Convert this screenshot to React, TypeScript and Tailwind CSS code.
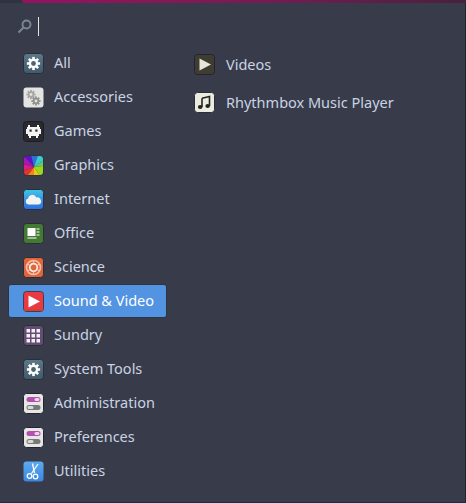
const Tile = ({ className = "", children }: { className?: string; children: React.ReactNode }) => (
  <svg viewBox="0 0 21 21" className={`w-[21px] h-[21px] shrink-0 ${className}`}>
    {children}
  </svg>
);

const Gear = ({ fill = "#fff", cx = 10.5, cy = 10.5, s = 1 }: { fill?: string; cx?: number; cy?: number; s?: number }) => (
  <g transform={`translate(${cx} ${cy}) scale(${s})`}>
    {[0, 45, 90, 135].map((a) => (
      <rect key={a} x="-1.3" y="-6.6" width="2.6" height="13.2" fill={fill} transform={`rotate(${a})`} />
    ))}
    <circle r="4.7" fill={fill} />
    <circle r="2.4" fill="#4a6676" />
  </g>
);

const SettingsIcon = () => (
  <Tile>
    <defs>
      <linearGradient id="sys" x1="0" y1="0" x2="0" y2="1">
        <stop offset="0" stopColor="#5d7888" />
        <stop offset="1" stopColor="#3e5a6b" />
      </linearGradient>
    </defs>
    <rect x="0.5" y="0.5" width="20" height="20" rx="3" fill="url(#sys)" stroke="#2b2e38" />
    <Gear />
  </Tile>
);

const SwitchIcon = () => (
  <Tile>
    <rect x="0.5" y="0.5" width="20" height="20" rx="3" fill="#e6e6e4" stroke="#23252d" />
    <rect x="3.5" y="4" width="14" height="5" rx="2.5" fill="#b44fb0" />
    <rect x="11.5" y="5" width="5" height="3" rx="1.5" fill="#eed5ee" />
    <rect x="3.5" y="12" width="14" height="5" rx="2.5" fill="#77787a" />
    <rect x="4.5" y="13" width="6" height="3" rx="1.5" fill="#d8d8d8" />
  </Tile>
);

const wheel: [string, string][] = [
  ["0,0 8,0", "#5a16c4"],
  ["8,0 15,0", "#2f6fd8"],
  ["15,0 21,0 21,5", "#3ec8d4"],
  ["21,5 21,11", "#58d070"],
  ["21,11 21,21 17,21", "#9ad81e"],
  ["17,21 11,21", "#e8c818"],
  ["11,21 4,21", "#f0851e"],
  ["4,21 0,21 0,16", "#e2362c"],
  ["0,16 0,9", "#d81e88"],
  ["0,9 0,0", "#a818b0"],
];

const categories: { name: string; icon: React.ReactNode }[] = [
  { name: "All", icon: <SettingsIcon /> },
  {
    name: "Accessories",
    icon: (
      <Tile>
        <rect x="0.5" y="0.5" width="20" height="20" rx="3" fill="#e4e4e2" />
        {[0, 45, 90, 135].map((a) => (
          <rect key={a} x="-0.9" y="-4.6" width="1.8" height="9.2" fill="#a5a5a3" transform={`translate(8 7.5) rotate(${a})`} />
        ))}
        <circle cx="8" cy="7.5" r="2.9" fill="#a5a5a3" />
        <circle cx="8" cy="7.5" r="1.4" fill="#e4e4e2" />
        {[0, 45, 90, 135].map((a) => (
          <rect key={a} x="-0.9" y="-4.6" width="1.8" height="9.2" fill="#8f8f8d" transform={`translate(13 14) rotate(${a})`} />
        ))}
        <circle cx="13" cy="14" r="2.9" fill="#8f8f8d" />
        <circle cx="13" cy="14" r="1.4" fill="#e4e4e2" />
      </Tile>
    ),
  },
  {
    name: "Games",
    icon: (
      <Tile>
        <rect x="0.5" y="0.5" width="20" height="20" rx="3" fill="#2a2a2e" stroke="#1c1d22" />
        <path
          d="M5 4h2v2h7V4h2v2h1v2h1v5h-2v2h-1v2h-2v-2H8v2H6v-2H5v-2H3V8h1V6h1z"
          fill="#f4f4f4"
        />
        <rect x="6.500" y="8.500" width="2.200" height="2.200" fill="#2a2a2e" />
        <rect x="12.300" y="8.500" width="2.200" height="2.200" fill="#2a2a2e" />
      </Tile>
    ),
  },
  {
    name: "Graphics",
    icon: (
      <Tile>
        <defs>
          <clipPath id="wheel">
            <rect x="1" y="1" width="19" height="19" rx="3" />
          </clipPath>
        </defs>
        <rect x="0.5" y="0.5" width="20" height="20" rx="3" fill="#2b2e38" />
        <g clipPath="url(#wheel)">
          {wheel.map(([pts, color]) => (
            <polygon key={pts} points={`11,12 ${pts}`} fill={color} />
          ))}
        </g>
      </Tile>
    ),
  },
  {
    name: "Internet",
    icon: (
      <Tile>
        <defs>
          <linearGradient id="net" x1="0" y1="0" x2="0" y2="1">
            <stop offset="0" stopColor="#3fc6e4" />
            <stop offset="0.5" stopColor="#3a94e6" />
            <stop offset="1" stopColor="#2c6fdc" />
          </linearGradient>
        </defs>
        <rect x="0.5" y="0.5" width="20" height="20" rx="3" fill="url(#net)" stroke="#2b2e38" />
        <path d="M5.500 15.500a3 3 0 0 1-.4-5.900 4 4 0 0 1 3-3.600 4.200 4.200 0 0 1 5.200 2.600 3.500 3.500 0 0 1 2.300 6.900z" fill="#f2f3f5" />
      </Tile>
    ),
  },
  {
    name: "Office",
    icon: (
      <Tile>
        <rect x="0.5" y="0.5" width="20" height="20" rx="3" fill="#437a33" stroke="#2b2e38" />
        <rect x="4.500" y="5" width="8" height="8" fill="#fff" />
        <rect x="13.500" y="5.500" width="3" height="1" fill="#fff" />
        <rect x="13.500" y="8.500" width="3" height="1" fill="#fff" />
        <rect x="13.500" y="11.500" width="3" height="1" fill="#fff" />
        <rect x="4.500" y="14.500" width="9" height="1" fill="#fff" />
      </Tile>
    ),
  },
  {
    name: "Science",
    icon: (
      <Tile>
        <rect x="0.5" y="0.5" width="20" height="20" rx="3" fill="#e2653a" stroke="#2b2e38" />
        <circle cx="10.500" cy="10.500" r="7" fill="none" stroke="#f3c3ae" strokeWidth="1.600" />
        <circle cx="10.500" cy="10.500" r="3.800" fill="none" stroke="#fbeee8" strokeWidth="1.800" />
        <circle cx="10.500" cy="10.500" r="1.300" fill="#e2653a" />
        {[0, 60, 120].map((a) => (
          <path key={a} d="M10.500 3V6.500M10.500 14.500V18" stroke="#f3c3ae" strokeWidth="1" transform={`rotate(${a} 10.500 10.500)`} />
        ))}
      </Tile>
    ),
  },
  {
    name: "Sound & Video",
    icon: (
      <Tile>
        <rect x="0.5" y="0.5" width="20" height="20" rx="3" fill="#e93a44" stroke="#3a3f55" />
        <rect x="1" y="18.500" width="19" height="1.500" fill="#d0402a" />
        <path d="M5.500 4.500L17 10.500L5.500 16.500z" fill="#fff" />
      </Tile>
    ),
  },
  {
    name: "Sundry",
    icon: (
      <Tile>
        <rect x="0.5" y="0.5" width="20" height="20" rx="3" fill="#644d74" stroke="#2b2e38" />
        {[4, 9, 14].map((y) =>
          [3.500, 8.500, 13.500].map((x) => <rect key={`${x}-${y}`} x={x} y={y} width="3.500" height="3.500" fill="#f2eef4" />),
        )}
      </Tile>
    ),
  },
  { name: "System Tools", icon: <SettingsIcon /> },
  { name: "Administration", icon: <SwitchIcon /> },
  { name: "Preferences", icon: <SwitchIcon /> },
  {
    name: "Utilities",
    icon: (
      <Tile>
        <defs>
          <linearGradient id="utl" x1="0" y1="0" x2="0" y2="1">
            <stop offset="0" stopColor="#5cabf0" />
            <stop offset="1" stopColor="#3a86e2" />
          </linearGradient>
        </defs>
        <rect x="0.5" y="0.5" width="20" height="20" rx="3" fill="url(#utl)" />
        <g fill="none" stroke="#fff" strokeWidth="1.300">
          <path d="M9.500 2.500L11.500 12" />
          <path d="M15 3L8.500 12.500" />
          <circle cx="6.500" cy="15" r="2.300" />
          <circle cx="12.500" cy="15.500" r="2.300" />
        </g>
      </Tile>
    ),
  },
];

export default function App() {
  return (
    <div
      className="w-[466px] h-[503px] bg-[#383c4a] flex flex-col overflow-hidden text-[14.5px] text-[#c9d3e3]"
      style={{ fontFamily: '"Noto Sans", "Open Sans", sans-serif' }}
    >
      {/* top edge, the window behind the menu */}
      <div className="h-[3px] shrink-0 flex bg-[#2f3340]">
        <div className="ml-[22px] flex-1 rounded-bl-sm bg-gradient-to-r from-[#96125f] via-[#7a1a58] to-[#4a1f3e]" />
      </div>

      <div className="flex-1 min-h-0 flex border-r border-[#1f2530]">
        <div className="w-[176px] shrink-0 pl-[8px] pt-[9px] flex flex-col">
          {/* search */}
          <div className="h-[28px] flex items-center pl-[9px] gap-[6px]">
            <svg viewBox="0 0 15 15" className="w-[15px] h-[15px] shrink-0">
              <circle cx="9.500" cy="5.500" r="4" fill="none" stroke="#7b8790" strokeWidth="1.900" />
              <path d="M6.500 8.500L1.500 13.500" stroke="#7b8790" strokeWidth="2" />
            </svg>
            <div className="w-px h-[19px] bg-[#e4e4e4]" />
          </div>

          <ul className="mt-[6px] flex flex-col">
            {categories.map((c) => {
              const active = c.name === "Sound & Video";
              return (
                <li
                  key={c.name}
                  className={`h-[34px] w-[159px] flex items-center pl-[14px] gap-[10px] whitespace-nowrap rounded-[3px] border ${
                    active ? "bg-[#5294e2] border-[#30343f] text-white" : "border-transparent"
                  }`}
                >
                  {c.icon}
                  <span>{c.name}</span>
                </li>
              );
            })}
          </ul>
        </div>

        <div className="flex-1 pl-[18px] pt-[51px] flex flex-col gap-[17px]">
          <div className="h-[21px] flex items-center gap-[11px]">
            <Tile>
              <rect x="0.5" y="0.5" width="20" height="20" rx="3" fill="#3f3c32" stroke="#24242a" />
              <path d="M5.500 4.500L17 10.500L5.500 16.500z" fill="#e9e6da" />
            </Tile>
            <span>Videos</span>
          </div>
          <div className="h-[21px] flex items-center gap-[11px]">
            <Tile>
              <rect x="0.5" y="0.5" width="20" height="20" rx="3" fill="#ecebdf" stroke="#2b2e38" />
              <path d="M8 6.200L15.500 4.500V14" fill="none" stroke="#25251f" strokeWidth="1.600" />
              <ellipse cx="6.200" cy="15" rx="2.300" ry="1.900" fill="#25251f" />
              <ellipse cx="13.700" cy="14" rx="2.300" ry="1.900" fill="#25251f" />
              <path d="M8 6.200V15" stroke="#25251f" strokeWidth="1.600" />
            </Tile>
            <span>Rhythmbox Music Player</span>
          </div>
        </div>
      </div>

      <div className="h-px shrink-0 bg-[#1b2a4a]" />
    </div>
  );
}
